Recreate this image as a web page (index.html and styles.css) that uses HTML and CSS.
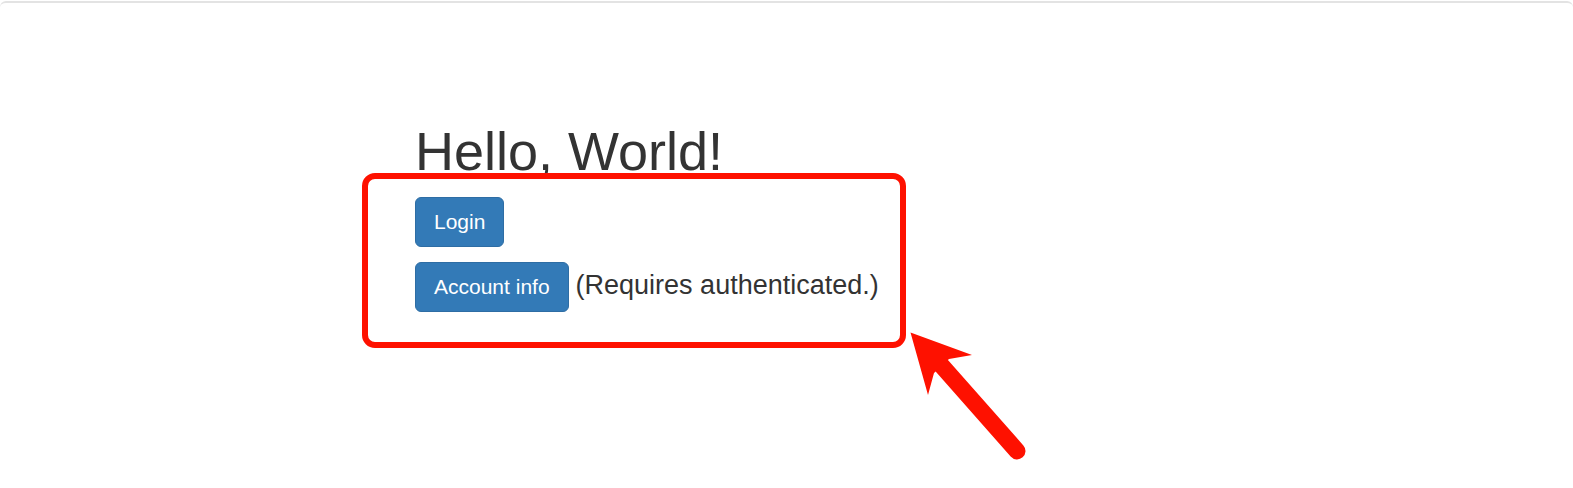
FILE: index.html
```html
<!DOCTYPE html>
<html lang="en">
<head>
  <meta charset="UTF-8" />
  <title>Hello, World!</title>
  <link rel="stylesheet" href="styles.css">
</head>
<body>
  <div class="window">
    <main class="content">
      <h1 class="title">Hello, World!</h1>
      <div class="row">
        <button class="btn">Login</button>
      </div>
      <div class="row">
        <button class="btn">Account info</button>
        <span class="note">(Requires authenticated.)</span>
      </div>
    </main>

    <!-- annotation drawn over the page -->
    <svg class="markup" width="1573" height="488" viewBox="0 0 1573 488">
      <rect x="365" y="176" width="538" height="169" rx="10" ry="10"
            fill="none" stroke="#fe1100" stroke-width="6" />
      <line x1="942" y1="366" x2="1017" y2="451"
            stroke="#fe1100" stroke-width="17" stroke-linecap="round" />
      <polygon points="910.5,332.5 972,355 949,359 934,373 928,395" fill="#fe1100" />
    </svg>
  </div>
</body>
</html>
```

FILE: styles.css
```css
* {
  margin: 0;
  padding: 0;
  box-sizing: border-box;
}

html,
body {
  background: #fff;
}

body {
  font-family: "Liberation Sans", Arial, Helvetica, sans-serif;
  color: #333;
}

.window {
  position: relative;
  height: 488px;
  margin-top: 1px;
  border-top: 2px solid #e3e3e3;
  border-radius: 6px 6px 0 0;
  overflow: hidden;
}

.content {
  padding: 119px 0 0 415px;
}

.title {
  font-size: 54px;
  font-weight: 500;
  line-height: 1.1;
  margin-bottom: 16px;
}

.row {
  display: flex;
  align-items: baseline;
  gap: 7px;
  margin-bottom: 15px;
}

.btn {
  font-family: inherit;
  font-size: 21px;
  line-height: 30px;
  padding: 9px 18px;
  color: #fff;
  background-color: #337ab7;
  border: 1px solid #2e6da4;
  border-radius: 6px;
}

.note {
  font-size: 27px;
  line-height: 30px;
}

.markup {
  position: absolute;
  top: -3px;
  left: 0;
  pointer-events: none;
}
```
